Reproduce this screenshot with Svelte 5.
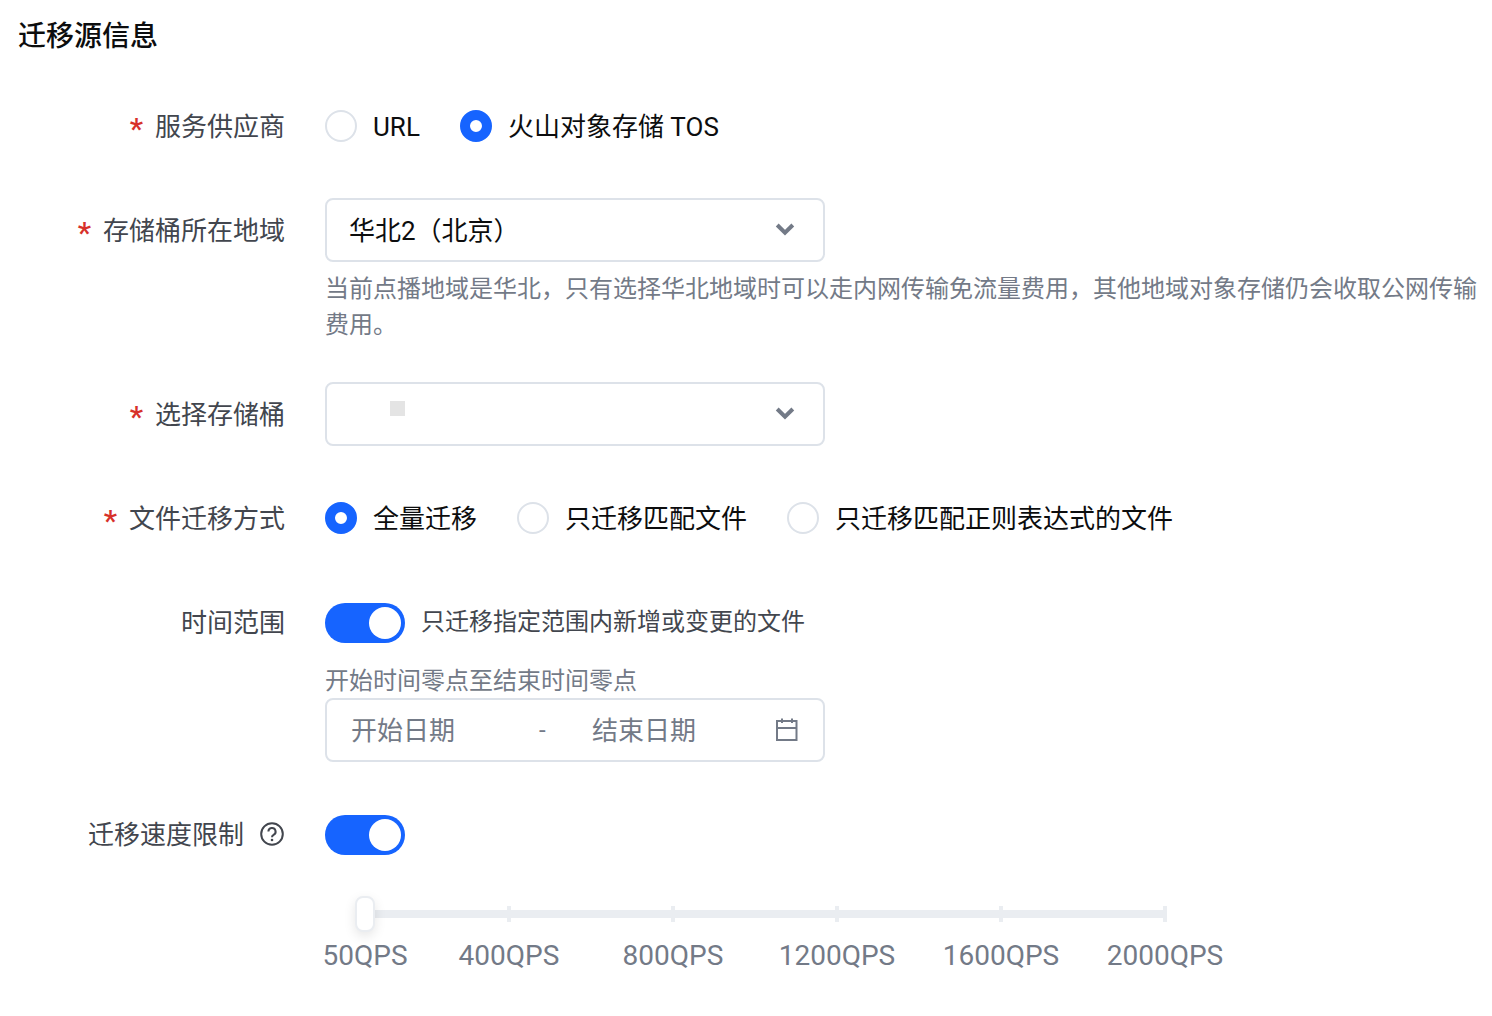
<script lang="ts">
  const marks = [
    { label: '50QPS', at: 0 },
    { label: '400QPS', at: 144 },
    { label: '800QPS', at: 308 },
    { label: '1200QPS', at: 472 },
    { label: '1600QPS', at: 636 },
    { label: '2000QPS', at: 800 }
  ];
</script>

{#snippet radio(text, checked = false)}
  <span class="radio">
    <span class="dot" class:checked></span>
    <span class="radio-text">{text}</span>
  </span>
{/snippet}

{#snippet chevron()}
  <svg class="chevron" width="20" height="20" viewBox="0 0 20 20" aria-hidden="true">
    <path d="M2.2 6 L10 13.6 L17.8 6" fill="none" stroke="#737a87" stroke-width="4" />
  </svg>
{/snippet}

<div class="page">
  <h2 class="title">迁移源信息</h2>

  <div class="form">
    <div class="row">
      <div class="label"><i>*</i>服务供应商</div>
      <div class="control inline">
        {@render radio('URL')}
        {@render radio('火山对象存储 TOS', true)}
      </div>
    </div>

    <div class="row">
      <div class="label"><i>*</i>存储桶所在地域</div>
      <div class="control">
        <div class="select">
          <span class="value">华北2（北京）</span>
          {@render chevron()}
        </div>
        <p class="hint">当前点播地域是华北，只有选择华北地域时可以走内网传输免流量费用，其他地域对象存储仍会收取公网传输费用。</p>
      </div>
    </div>

    <div class="row">
      <div class="label"><i>*</i>选择存储桶</div>
      <div class="control">
        <div class="select">
          <span class="redacted"></span>
          {@render chevron()}
        </div>
      </div>
    </div>

    <div class="row">
      <div class="label"><i>*</i>文件迁移方式</div>
      <div class="control inline">
        {@render radio('全量迁移', true)}
        {@render radio('只迁移匹配文件')}
        {@render radio('只迁移匹配正则表达式的文件')}
      </div>
    </div>

    <div class="row">
      <div class="label">时间范围</div>
      <div class="control">
        <div class="switch-line">
          <span class="switch"></span>
          <span class="switch-text">只迁移指定范围内新增或变更的文件</span>
        </div>
        <p class="hint">开始时间零点至结束时间零点</p>
        <div class="select date">
          <span class="date-part">开始日期</span>
          <span class="date-sep">-</span>
          <span class="date-part end">结束日期</span>
          <svg width="24" height="24" viewBox="0 0 24 24" aria-hidden="true">
            <path d="M2 3 H21.5 V22 H2 Z M2 10 H21.5 M7 0.5 V5 M17 0.5 V5" fill="none" stroke="#737a87" stroke-width="2" />
          </svg>
        </div>
      </div>
    </div>

    <div class="row">
      <div class="label">
        迁移速度限制
        <svg class="help" width="24" height="24" viewBox="0 0 24 24" aria-hidden="true">
          <circle cx="12" cy="12" r="10.8" fill="none" stroke="#42464e" stroke-width="2" />
          <path d="M8.4 9.6 A3.6 3.6 0 1 1 13.6 12.8 C12.4 13.4 12 14 12 15.2" fill="none" stroke="#42464e" stroke-width="2" />
          <circle cx="12" cy="18" r="1.3" fill="#42464e" />
        </svg>
      </div>
      <div class="control">
        <div class="switch-line"><span class="switch"></span></div>
        <div class="slider">
          <div class="track">
            {#each marks.slice(1) as m}
              <span class="tick" style="left: {m.at}px"></span>
            {/each}
            <span class="thumb"></span>
          </div>
          <div class="scale">
            {#each marks as m}
              <span class="mark" style="left: {m.at}px">{m.label}</span>
            {/each}
          </div>
        </div>
      </div>
    </div>
  </div>
</div>

<style>
  :global(body) {
    background: #fff;
  }

  .page {
    width: 1492px;
    height: 1016px;
    box-sizing: border-box;
    padding: 16px 14px 0 18px;
    overflow: hidden;
    font-family: Roboto, "Noto Sans CJK SC", sans-serif;
    font-size: 26px;
    line-height: 36px;
    color: #0c0d0e;
  }

  .title {
    margin: 0;
    font-size: 28px;
    line-height: 42px;
    font-weight: 500;
    color: #0c0d0e;
  }

  .form {
    display: flex;
    flex-direction: column;
    gap: 40px;
    margin-top: 36px;
  }

  .row {
    display: flex;
    gap: 40px;
  }

  .label {
    flex: none;
    box-sizing: border-box;
    width: 267px;
    height: 64px;
    padding-top: 2px;
    display: flex;
    align-items: center;
    justify-content: flex-end;
    color: #42464e;
    white-space: nowrap;
  }

  .label i {
    font-style: normal;
    font-weight: 500;
    color: #d7312a;
    margin-right: 12px;
    font-size: 30px;
    position: relative;
    top: 2px;
  }

  .help {
    margin: -2px 1px 0 16px;
  }

  .control {
    flex: 1;
    min-width: 0;
  }

  .inline {
    display: flex;
    align-items: center;
    gap: 40px;
    height: 64px;
  }

  .radio {
    display: inline-flex;
    align-items: center;
    gap: 16px;
  }

  .radio-text {
    margin-top: 2px;
  }

  .dot {
    width: 32px;
    height: 32px;
    box-sizing: border-box;
    border-radius: 50%;
    border: 2px solid #dde2e9;
    background: #fff;
  }

  .dot.checked {
    border: 10px solid #1664ff;
  }

  .select {
    width: 500px;
    height: 64px;
    box-sizing: border-box;
    border: 2px solid #dde2e9;
    border-radius: 8px;
    display: flex;
    align-items: center;
    padding: 0 28px 0 22px;
    position: relative;
  }

  .value {
    margin-top: 2px;
  }

  .chevron {
    margin-left: auto;
    margin-top: -2px;
  }

  .redacted {
    position: absolute;
    left: 63px;
    top: 17px;
    width: 15px;
    height: 15px;
    background: #e4e4e4;
  }

  .hint {
    margin: 9px 0 -1px;
    font-size: 24px;
    line-height: 36px;
    color: #737a87;
  }

  .switch-line {
    display: flex;
    align-items: center;
    gap: 16px;
    height: 64px;
  }

  .switch {
    position: relative;
    width: 80px;
    height: 40px;
    flex: none;
    margin-top: 2px;
    border-radius: 20px;
    background: #1664ff;
  }

  .switch::after {
    content: '';
    position: absolute;
    top: 4px;
    right: 4px;
    width: 32px;
    height: 32px;
    border-radius: 50%;
    background: #fff;
  }

  .switch-text {
    font-size: 24px;
    color: #42464e;
  }

  .date {
    padding: 0 24px 0 24px;
    color: #737a87;
  }

  .date-part {
    width: 104px;
    margin-top: 2px;
  }

  .date-sep {
    width: 0;
    margin-left: 84px;
    font-size: 24px;
  }

  .date-part.end {
    margin-left: 53px;
  }

  .date svg {
    margin-left: auto;
  }

  .slider {
    width: 860px;
    margin-left: 40px;
    margin-top: 44px;
  }

  .track {
    position: relative;
    width: 802px;
    height: 8px;
    background: #eaedf1;
  }

  .tick {
    position: absolute;
    top: -4px;
    width: 4px;
    height: 16px;
    margin-left: -2px;
    background: #eaedf1;
  }

  .thumb {
    position: absolute;
    left: -10px;
    top: -14px;
    width: 20px;
    height: 36px;
    box-sizing: border-box;
    border: 2px solid #eaedf1;
    border-radius: 8px;
    background: #fff;
    box-shadow: 0 4px 12px rgba(0, 0, 0, 0.1);
  }

  .scale {
    position: relative;
    height: 40px;
    margin-top: 18px;
  }

  .mark {
    position: absolute;
    top: 0;
    transform: translateX(-50%);
    font-size: 28px;
    line-height: 40px;
    color: #737a87;
    white-space: nowrap;
  }
</style>
